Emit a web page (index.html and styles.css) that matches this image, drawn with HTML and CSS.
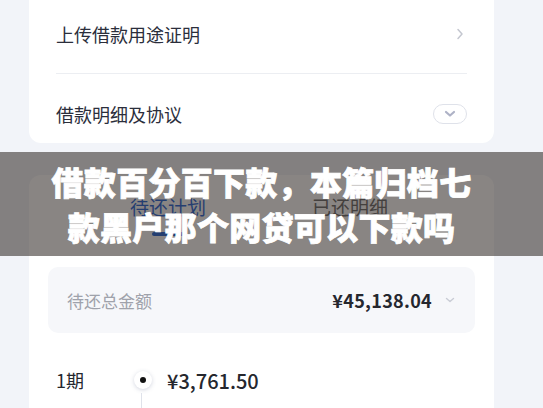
FILE: index.html
```html
<!DOCTYPE html>
<html lang="zh-CN">
<head>
<meta charset="utf-8">
<link rel="stylesheet" href="styles.css">
</head>
<body>
<div class="page">
  <section class="card card-top">
    <div class="row row-first">
      <span class="row-label">上传借款用途证明</span>
      <svg class="chev-right" width="8" height="12" viewBox="0 0 8 12"><polyline points="2,1.5 6,6 2,10.5" fill="none" stroke="#c4c7d0" stroke-width="1.5" stroke-linecap="round" stroke-linejoin="round"/></svg>
    </div>
    <div class="row row-second">
      <span class="row-label">借款明细及协议</span>
      <span class="pill"><svg width="12" height="8" viewBox="0 0 12 8"><polyline points="2,2 6,5.5 10,2" fill="none" stroke="#aeb2c6" stroke-width="2.2" stroke-linecap="round" stroke-linejoin="round"/></svg></span>
    </div>
  </section>

  <section class="card card-plan">
    <div class="tabs">
      <div class="tab tab-active"><span>待还计划</span><i class="tab-bar"></i></div>
      <div class="tab"><span>已还明细</span></div>
    </div>
    <div class="total">
      <span class="total-label">待还总金额</span>
      <span class="total-right"><b class="total-amount">¥45,138.04</b>
        <svg width="10" height="6" viewBox="0 0 10 6"><polyline points="1.5,1.5 5,4.5 8.5,1.5" fill="none" stroke="#c9ccd5" stroke-width="1.4" stroke-linecap="round" stroke-linejoin="round"/></svg></span>
    </div>
    <div class="term">
      <div class="term-head">
        <span class="term-no">1期</span>
        <span class="dot"><i></i></span>
        <span class="term-amount">¥3,761.50</span>
      </div>
      <div class="term-sub">
        <span class="term-date">2024/04/22</span>
        <span class="line-wrap"><i class="vline"></i></span>
        <span class="term-detail">本金 ¥3,200.00</span>
        <span class="term-detail">利息 ¥561.50</span>
      </div>
    </div>
  </section>
</div>

<div class="banner">
  <p class="banner-title">借款百分百下款，本篇归档七<br>款黑户那个网贷可以下款吗</p>
</div>
</body>
</html>
```

FILE: styles.css
```css
* { box-sizing: border-box; }
html, body { margin: 0; padding: 0; }
body {
  background: #f2f4f9;
  font-family: "Noto Sans CJK SC", "Noto Sans", sans-serif;
  width: 543px;
  height: 408px;
  overflow: hidden;
  position: relative;
}
.page {
  padding: 0 49px 0 29px;
  width: 543px;
}
.card {
  background: #fff;
  width: 465px;
}
.card-top {
  border-radius: 0 0 12px 12px;
  padding: 0 27px;
  height: 143px;
}
.row {
  display: flex;
  justify-content: space-between;
}
.row-first {
  height: 74px;
  align-items: center;
  padding-bottom: 6px;
  padding-right: 3px;
  border-bottom: 1px solid #eceef2;
}
.row-second {
  padding-top: 30px;
  align-items: center;
}
.row-label {
  font-size: 18px;
  line-height: 20px;
  color: #2b2e3b;
}
.pill {
  width: 34px;
  height: 20px;
  border: 1px solid #dfe2ea;
  border-radius: 10px;
  display: flex;
  align-items: center;
  justify-content: center;
}
.card-plan {
  margin-top: 32px;
  border-radius: 12px 12px 0 0;
  height: 260px;
  padding: 0 19px;
}
.tabs {
  display: flex;
  padding-top: 20px;
  padding-left: 82px;
  gap: 106px;
}
.tab {
  display: flex;
  flex-direction: column;
  align-items: center;
  width: 76px;
}
.tab span {
  font-size: 19px;
  line-height: 24px;
  color: #666;
}
.tab-active span { color: #1f63d6; }
.tab-bar {
  display: block;
  width: 32px;
  height: 4px;
  border-radius: 2px;
  background: #1f63d6;
  margin-top: 13px;
}
.total {
  margin-top: 31px;
  height: 66px;
  background: #f6f7fa;
  border-radius: 10px;
  display: flex;
  align-items: center;
  justify-content: space-between;
  padding: 0 20px 0 19px;
}
.total-label {
  font-size: 17px;
  color: #9fa2ab;
}
.total-right {
  display: flex;
  align-items: center;
  gap: 13px;
}
.total-amount {
  font-size: 18px;
  font-weight: 700;
  color: #25272e;
  letter-spacing: 0.3px;
}
.term {
  margin-top: 34px;
  padding-left: 8px;
}
.term-head, .term-sub {
  display: flex;
  align-items: center;
}
.term-head { height: 26px; }
.term-no {
  width: 78px;
  font-size: 18px;
  color: #25272e;
}
.dot {
  width: 18px;
  height: 18px;
  border-radius: 50%;
  background: #fff;
  box-shadow: 0 1px 4px rgba(80, 90, 130, 0.25);
  display: flex;
  align-items: center;
  justify-content: center;
}
.dot i {
  width: 6px;
  height: 6px;
  border-radius: 50%;
  background: #111;
}
.term-amount {
  margin-left: 15px;
  font-size: 20px;
  font-weight: 500;
  color: #25272e;
}
.term-sub {
  align-items: flex-start;
  height: 40px;
}
.term-date {
  width: 78px;
  font-size: 14px;
  color: #a4a7b0;
  padding-top: 11px;
}
.line-wrap {
  width: 18px;
  display: flex;
  justify-content: center;
}
.vline {
  display: block;
  width: 1px;
  height: 40px;
  background: #dfe2ea;
}
.term-detail {
  font-size: 14px;
  color: #a4a7b0;
  padding-top: 11px;
  margin-left: 15px;
  width: 150px;
}
.banner {
  position: absolute;
  left: 0;
  top: 152px;
  width: 543px;
  height: 104px;
  background: rgba(40, 32, 30, 0.55);
  display: flex;
  align-items: center;
  justify-content: center;
  padding-right: 20px;
}
.banner-title {
  margin: 0;
  color: #fff;
  font-size: 32px;
  font-weight: 900;
  line-height: 45px;
  text-align: center;
  letter-spacing: 0.3px;
  -webkit-text-stroke: 0.8px #fff;
}
```
